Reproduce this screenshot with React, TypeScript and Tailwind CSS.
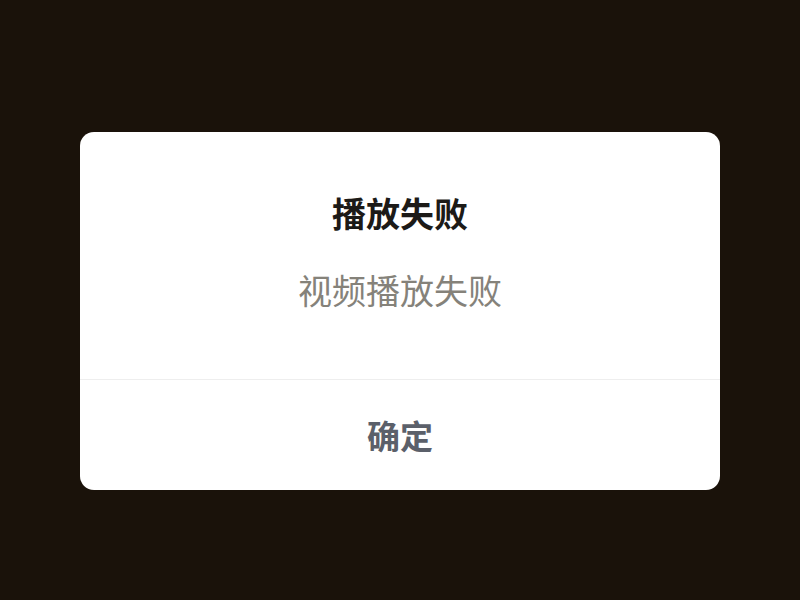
export default function App() {
  return (
    <div
      className="min-h-screen w-full bg-[#1a120a] flex justify-center pt-[132px]"
      style={{ fontFamily: '"Noto Sans CJK SC", "Noto Sans", sans-serif' }}
    >
      <div className="w-[640px] h-[358px] bg-white rounded-[14px] flex flex-col overflow-hidden">
        <div className="flex flex-col items-center pt-[61px] h-[247px]">
          <h2 className="text-[34px] leading-[40px] font-bold text-[#1c1a17]">播放失败</h2>
          <p className="mt-[37px] text-[34px] leading-[40px] text-[#85827a]">视频播放失败</p>
        </div>
        <button className="flex-1 border-t border-[#eeeeee] flex items-center justify-center text-[33px] leading-[40px] font-bold text-[#5b606a]">
          确定
        </button>
      </div>
    </div>
  )
}
